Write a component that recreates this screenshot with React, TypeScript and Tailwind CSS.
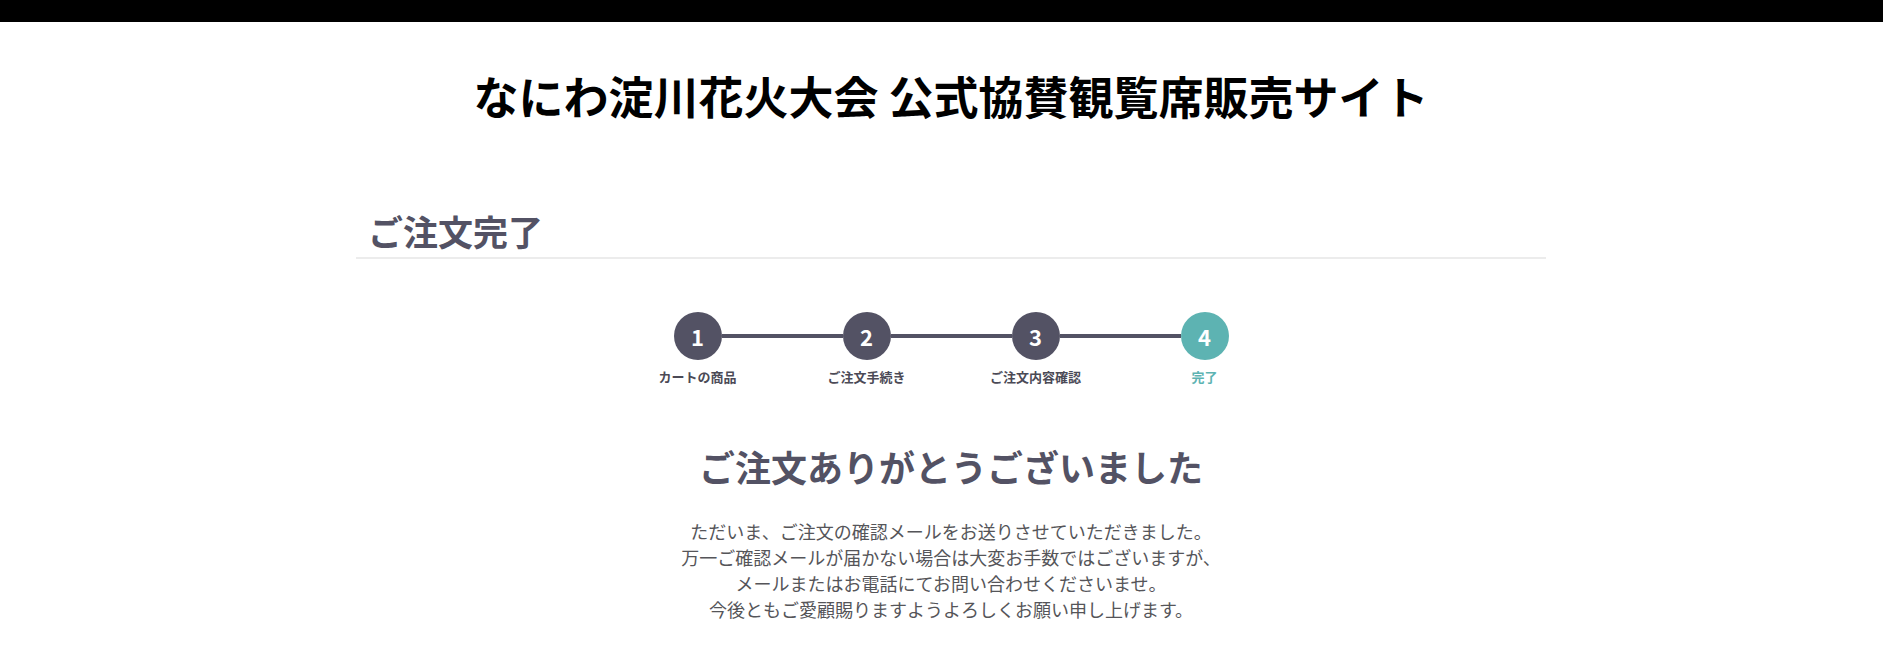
import React from "react";

const steps = [
  { no: 1, label: "カートの商品" },
  { no: 2, label: "ご注文手続き" },
  { no: 3, label: "ご注文内容確認" },
  { no: 4, label: "完了" },
];

const current = 4;

const StepBar = () => {
  return (
    <div className="mx-auto grid w-[676px] grid-cols-4">
      {steps.map((step, i) => {
        const active = step.no === current;
        return (
          <div key={step.no} className="flex flex-col items-center">
            <div className="flex w-full items-center">
              <div
                className={
                  i === 0 ? "h-[4px] flex-1" : "h-[4px] flex-1 bg-[#535264]"
                }
              />
              <div
                className={
                  active
                    ? "flex h-[48px] w-[48px] items-center justify-center rounded-full bg-[#5db3b2] text-[22px] font-bold text-white"
                    : "flex h-[48px] w-[48px] items-center justify-center rounded-full bg-[#535264] text-[22px] font-bold text-white"
                }
              >
                {step.no}
              </div>
              <div
                className={
                  i === steps.length - 1
                    ? "h-[4px] flex-1"
                    : "h-[4px] flex-1 bg-[#535264]"
                }
              />
            </div>
            <p
              className={
                active
                  ? "mt-[7px] text-[13px] font-bold leading-[1.5] text-[#5db3b2]"
                  : "mt-[7px] text-[13px] font-bold leading-[1.5] text-[#4b4a56]"
              }
            >
              {step.label}
            </p>
          </div>
        );
      })}
    </div>
  );
};

const App = () => {
  return (
    <div className="min-h-screen bg-white font-['Noto_Sans_CJK_JP','Noto_Sans',sans-serif]">
      <header className="h-[22px] bg-black" />

      <main className="pl-[19px] pb-10">
        <h1 className="pt-[40px] text-center text-[45px] font-bold leading-[1.5] text-black">
          なにわ淀川花火大会 公式協賛観覧席販売サイト
        </h1>

        <div className="mx-auto mt-[75px] w-[1190px] border-b-2 border-[#ececec]">
          <h2 className="pl-3 text-[35px] font-bold leading-[1.5] text-[#535264]">
            ご注文完了
          </h2>
        </div>

        <div className="mt-[53px]">
          <StepBar />
        </div>

        <div className="text-center">
          <h3 className="mt-[52px] text-[36px] font-bold leading-[1.5] text-[#535264]">
            ご注文ありがとうございました
          </h3>
          <div className="mt-[25px] text-[18px] leading-[26px] text-[#555559]">
            <p>ただいま、ご注文の確認メールをお送りさせていただきました。</p>
            <p>万一ご確認メールが届かない場合は大変お手数ではございますが、</p>
            <p>メールまたはお電話にてお問い合わせくださいませ。</p>
            <p>今後ともご愛顧賜りますようよろしくお願い申し上げます。</p>
          </div>
        </div>
      </main>
    </div>
  );
};

export default App;
